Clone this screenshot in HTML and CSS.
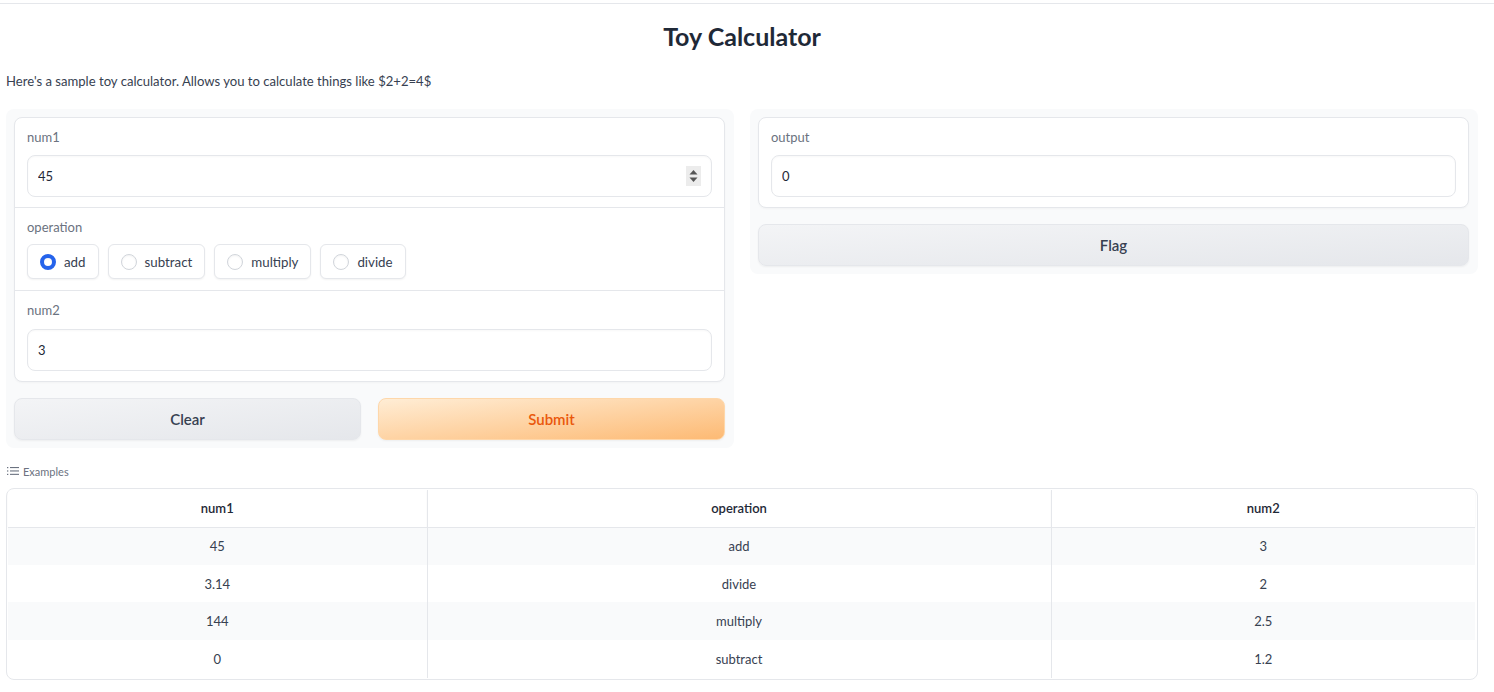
FILE: index.html
```html
<!DOCTYPE html>
<html lang="en">
<head>
<meta charset="utf-8">
<title>Toy Calculator</title>
<link rel="stylesheet" href="styles.css">
</head>
<body>
<div class="app">
  <h1 class="title">Toy Calculator</h1>
  <p class="desc">Here's a sample toy calculator. Allows you to calculate things like $2+2=4$</p>

  <div class="row">
    <div class="panel">
      <div class="card">
        <div class="block">
          <div class="label">num1</div>
          <div class="field">
            <input class="input" type="text" value="45" readonly>
            <span class="spinner">
              <svg width="15" height="20" viewBox="0 0 15 20"><path d="M7.5 4 L11.5 8.5 L3.5 8.5 Z" fill="#555"/><path d="M7.5 16 L11.5 11.5 L3.5 11.5 Z" fill="#555"/></svg>
            </span>
          </div>
        </div>
        <div class="block op">
          <div class="label">operation</div>
          <div class="radios">
            <label class="radio"><span class="dot on"></span>add</label>
            <label class="radio"><span class="dot"></span>subtract</label>
            <label class="radio"><span class="dot"></span>multiply</label>
            <label class="radio"><span class="dot"></span>divide</label>
          </div>
        </div>
        <div class="block wide">
          <div class="label">num2</div>
          <div class="field">
            <input class="input" type="text" value="3" readonly>
          </div>
        </div>
      </div>
      <div class="buttons">
        <button class="btn secondary">Clear</button>
        <button class="btn primary">Submit</button>
      </div>
    </div>

    <div class="panel">
      <div class="card">
        <div class="block">
          <div class="label">output</div>
          <div class="field">
            <input class="input" type="text" value="0" readonly>
          </div>
        </div>
      </div>
      <div class="buttons">
        <button class="btn secondary">Flag</button>
      </div>
    </div>
  </div>

  <div class="examples-label">
    <svg width="12" height="10" viewBox="0 0 12 10"><g fill="#6b7280"><rect x="0" y="1" width="1.3" height="1.2"/><rect x="0" y="4.4" width="1.3" height="1.2"/><rect x="0" y="7.8" width="1.3" height="1.2"/><rect x="3" y="1" width="9" height="1.1"/><rect x="3" y="4.4" width="9" height="1.1"/><rect x="3" y="7.8" width="9" height="1.1"/></g></svg>
    <span>Examples</span>
  </div>

  <div class="table-wrap">
    <table class="examples">
      <colgroup><col class="c1"><col class="c2"><col class="c3"></colgroup>
      <thead>
        <tr><th>num1</th><th>operation</th><th>num2</th></tr>
      </thead>
      <tbody>
        <tr><td>45</td><td>add</td><td>3</td></tr>
        <tr><td>3.14</td><td>divide</td><td>2</td></tr>
        <tr><td>144</td><td>multiply</td><td>2.5</td></tr>
        <tr><td>0</td><td>subtract</td><td>1.2</td></tr>
      </tbody>
    </table>
  </div>
</div>
</body>
</html>
```

FILE: styles.css
```css
* { box-sizing: border-box; }
html, body { margin: 0; padding: 0; background: #fff; }
body {
  font-family: "Lato", "Noto Sans", sans-serif;
  color: #1f2937;
  padding-top: 3px;
}
.app {
  border-top: 1px solid #e5e7eb;
  padding: 0 16px 0 6px;
}
.title {
  margin: 0;
  padding-top: 17px;
  height: 67px;
  text-align: center;
  font-size: 25px;
  font-weight: 700;
  line-height: 30px;
  color: #1f2937;
}
.desc {
  margin: 0;
  font-size: 13.1px;
  line-height: 20px;
  color: #374151;
  height: 38px;
}
.row {
  display: flex;
  gap: 16px;
  align-items: flex-start;
}
.panel {
  flex: 1 1 0;
  background: #f9fafb;
  border-radius: 8px;
  padding: 8px 9px 8px 8px;
  display: flex;
  flex-direction: column;
  gap: 16px;
}
.card {
  background: #fff;
  border: 1px solid #e5e7eb;
  border-radius: 8px;
  box-shadow: 0 1px 2px rgba(0,0,0,0.03);
}
.block {
  padding: 9px 12px 10px;
  border-top: 1px solid #e5e7eb;
  display: flex;
  flex-direction: column;
  gap: 8px;
}
.block:first-child { border-top: none; }
.block.op { padding-bottom: 11px; gap: 7px; }
.block.wide { gap: 9px; }
.label {
  font-size: 13px;
  line-height: 20px;
  color: #6b7280;
}
.field {
  display: flex;
  align-items: center;
  height: 42px;
  border: 1px solid #e5e7eb;
  border-radius: 8px;
  background: #fff;
  box-shadow: inset 0 1px 2px rgba(0,0,0,0.03);
  padding: 0 10px 0 10px;
}
.input {
  flex: 1;
  border: none;
  outline: none;
  background: transparent;
  font: inherit;
  font-size: 13px;
  color: #1f2937;
  padding: 0;
  min-width: 0;
}
.spinner {
  width: 15px;
  height: 20px;
  background: #ececec;
  display: flex;
}
.radios {
  display: flex;
  gap: 9px;
}
.radio {
  display: flex;
  align-items: center;
  gap: 8px;
  height: 35px;
  padding: 0 12px 0 12px;
  border: 1px solid #e5e7eb;
  border-radius: 6px;
  background: #fff;
  box-shadow: 0 1px 2px rgba(0,0,0,0.05);
  font-size: 13.3px;
  color: #374151;
}
.dot {
  width: 16px;
  height: 16px;
  border-radius: 50%;
  border: 1px solid #d1d5db;
  background: #fff;
  box-shadow: inset 0 1px 2px rgba(0,0,0,0.05);
}
.dot.on {
  border: 4px solid #2563eb;
  background: #fff;
}
.buttons {
  display: flex;
  gap: 17px;
}
.btn {
  flex: 1;
  height: 42px;
  border-radius: 8px;
  font-family: inherit;
  font-size: 15px;
  font-weight: 600;
  cursor: pointer;
}
.secondary {
  background: linear-gradient(to bottom right, #f3f4f6, #e5e7eb);
  border: 1px solid #e5e7eb;
  color: #374151;
  box-shadow: 0 1px 2px rgba(0,0,0,0.05);
}
.primary {
  background: linear-gradient(to bottom right, #ffedd5, #fdba74);
  border: 1px solid #fed7aa;
  color: #ea580c;
  box-shadow: 0 1px 2px rgba(0,0,0,0.05);
}
.examples-label {
  display: flex;
  align-items: center;
  gap: 4px;
  margin-top: 15px;
  height: 16px;
  padding-left: 1px;
  font-size: 11px;
  color: #6b7280;
}
.table-wrap {
  margin-top: 9px;
  border: 1px solid #e5e7eb;
  border-radius: 8px;
  padding: 1px;
  width: 1472px;
  overflow: hidden;
}
.examples {
  width: 1467px;
  border-collapse: collapse;
  table-layout: fixed;
  font-size: 13px;
}
.c1 { width: 419px; }
.c2 { width: 624px; }
.c3 { width: 424px; }
.examples th {
  height: 37px;
  font-weight: 600;
  color: #1f2937;
  background: #fff;
  border-bottom: 1px solid #e5e7eb;
  box-shadow: 0 1px 2px rgba(0,0,0,0.04);
}
.examples th, .examples td {
  text-align: center;
  border-right: 1px solid #e5e7eb;
  padding: 0;
}
.examples th:last-child, .examples td:last-child { border-right: none; }
.examples td {
  height: 37.7px;
  color: #374151;
}
.examples tbody tr:nth-child(odd) td { background: #f9fafb; }
```
